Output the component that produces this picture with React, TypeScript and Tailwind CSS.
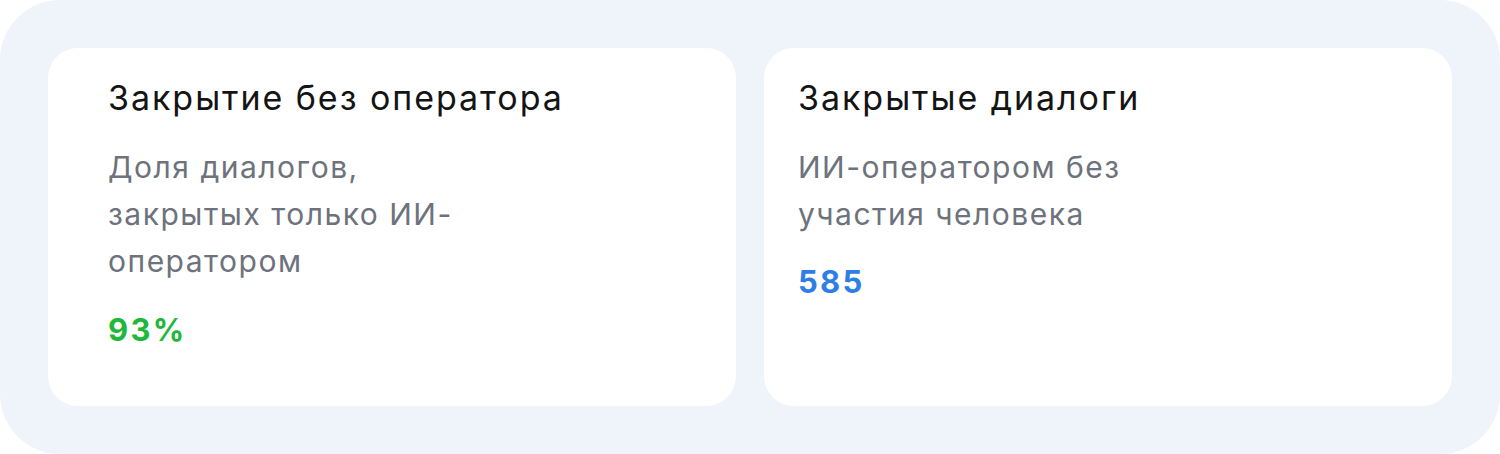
const font = { fontFamily: "Inter, 'Noto Sans', sans-serif" };

type Stat = {
  title: string;
  lines: string[];
  value: string;
  valueClass: string;
  padClass: string;
  valueGap: string;
};

const stats: Stat[] = [
  {
    title: "Закрытие без оператора",
    lines: ["Доля диалогов,", "закрытых только ИИ-", "оператором"],
    value: "93%",
    valueClass: "text-[#1eb83b]",
    padClass: "pl-[60px]",
    valueGap: "mt-[27px]",
  },
  {
    title: "Закрытые диалоги",
    lines: ["ИИ-оператором без", "участия человека"],
    value: "585",
    valueClass: "text-[#2f7ee6]",
    padClass: "pl-[34px]",
    valueGap: "mt-[26px]",
  },
];

function StatCard({ stat }: { stat: Stat }) {
  return (
    <div className={`bg-white rounded-[30px] pt-[30px] ${stat.padClass}`}>
      <div className="text-[34px] leading-[40px] tracking-[1.95px] text-[#141414]">{stat.title}</div>
      <div className="mt-[26px] text-[30px] leading-[47px] tracking-[1.5px] text-[#6d727c]">
        {stat.lines.map((l) => (
          <div key={l}>{l}</div>
        ))}
      </div>
      <div
        className={`${stat.valueGap} text-[31px] leading-[36px] font-bold tracking-[2.3px] ${stat.valueClass}`}
      >
        {stat.value}
      </div>
    </div>
  );
}

export default function App() {
  return (
    <div className="w-[1500px] h-[454px] bg-white" style={font}>
      <div className="h-full rounded-[60px] bg-[#eff4fa] p-12 grid grid-cols-2 gap-7">
        {stats.map((s) => (
          <StatCard key={s.title} stat={s} />
        ))}
      </div>
    </div>
  );
}
